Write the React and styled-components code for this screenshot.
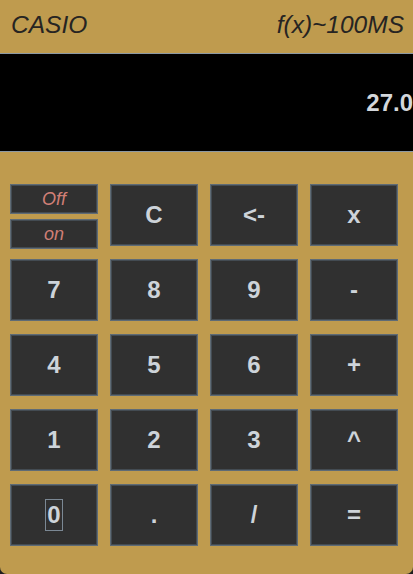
import React from 'react';
import styled, { createGlobalStyle, css } from 'styled-components';

const Gold = '#bf9b4e'

const GlobalStyle = createGlobalStyle`
  html, body {
    margin: 0;
    padding: 0;
    background: #1e1e1e;
    overflow: hidden;
  }
  * { box-sizing: border-box; }
`

const keys = [
    ['C', '<-', 'x'],
    ['7', '8', '9', '-'],
    ['4', '5', '6', '+'],
    ['1', '2', '3', '^'],
    ['0', '.', '/', '='],
]

const App = () => (
    <>
        <GlobalStyle/>
        <Calculator>
            <Header>
                <Brand>CASIO</Brand>
                <Brand>f(x)~100MS</Brand>
            </Header>
            <Display>27.0</Display>
            <Keypad>
                <PowerStack>
                    <PowerKey>Off</PowerKey>
                    <PowerKey>on</PowerKey>
                </PowerStack>
                {keys.flat().map((label, i) =>
                    <Key key={i}>
                        {label === '0' ? <Focused>{label}</Focused> : label}
                    </Key>
                )}
            </Keypad>
        </Calculator>
    </>
)

const Calculator = styled.div`
  width: 413px;
  height: 574px;
  background: ${Gold};
  border-radius: 0 0 7px 7px;
  overflow: hidden;
  display: flex;
  flex-direction: column;
  font-family: "Liberation Sans", Arial, sans-serif;
`

const Header = styled.header`
  height: 53px;
  display: flex;
  justify-content: space-between;
  align-items: center;
  padding: 0 9px 0 11px;
`

const Brand = styled.span`
  font-size: 24.5px;
  font-style: italic;
  color: #262422;
  padding-bottom: 3px;
`

const Display = styled.div`
  height: 99px;
  background: #000;
  border-top: 1px solid #8d99a3;
  border-bottom: 1px solid #8d99a3;
  display: flex;
  align-items: center;
  justify-content: flex-end;
  color: #d3d7db;
  font-size: 24px;
  font-weight: bold;
  padding-top: 1px;
`

const Keypad = styled.div`
  display: grid;
  grid-template-columns: repeat(4, 88px);
  grid-template-rows: repeat(5, 62px);
  column-gap: 12px;
  row-gap: 13px;
  padding: 32px 0 0 10px;
`

const keyFace = css`
  background: #303030;
  border: 1px solid #5f6b75;
  box-shadow: inset 0 0 0 1px #434b52;
  display: flex;
  align-items: center;
  justify-content: center;
`

const Key = styled.div`
  ${keyFace};
  color: #cdd3d9;
  font-size: 24px;
  font-weight: bold;
`

const PowerStack = styled.div`
  display: flex;
  flex-direction: column;
  gap: 5px;
  height: 65px;
`

const PowerKey = styled.div`
  ${keyFace};
  height: 30px;
  color: #cf7f76;
  font-size: 18px;
  font-style: italic;
`

const Focused = styled.span`
  border: 1px solid #7b8894;
  padding: 2px 1px 1px;
  line-height: 1.1;
`

export default App
